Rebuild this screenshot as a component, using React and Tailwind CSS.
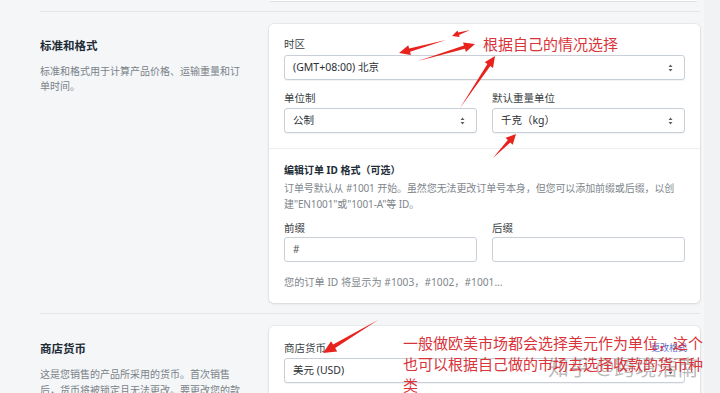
const font = { fontFamily: '"Noto Sans", "Noto Sans CJK SC", sans-serif' };

function Chevron() {
  return (
    <svg width="7" height="10" viewBox="0 0 7 10" className="shrink-0">
      <path d="M3.5 1.5 L5.5 4 L1.5 4 Z" fill="#5a6066" />
      <path d="M3.5 8.5 L5.5 6 L1.5 6 Z" fill="#5a6066" />
    </svg>
  );
}

function Select({ value, className = "" }) {
  return (
    <div className={`h-[25px] flex items-center justify-between pl-[8px] pr-[10px] bg-white border border-[#c9cfd6] rounded-[3px] shadow-[0_1px_0_rgba(22,29,37,0.05)] text-[10.5px] text-[#2b3036] ${className}`}>
      <span>{value}</span>
      <Chevron />
    </div>
  );
}

function Input({ value, className = "" }) {
  return (
    <div className={`h-[25px] flex items-center pl-[8px] bg-white border border-[#c9cfd6] rounded-[3px] text-[10px] text-[#555] ${className}`}>
      {value}
    </div>
  );
}

function Label({ children, className = "" }) {
  return <div className={`text-[10.5px] leading-[14px] text-[#3a3f44] ${className}`}>{children}</div>;
}

// tapered arrow polygon, tail -> head
function arrowPoints(x1, y1, x2, y2, w = 3.5, head = 11, hw = 5) {
  const dx = x2 - x1, dy = y2 - y1;
  const len = Math.hypot(dx, dy);
  const ux = dx / len, uy = dy / len;
  const nx = -uy, ny = ux;
  const bx = x2 - ux * head, by = y2 - uy * head;
  const pts = [
    [x1, y1],
    [bx + nx * (w / 2), by + ny * (w / 2)],
    [bx + nx * hw, by + ny * hw],
    [x2, y2],
    [bx - nx * hw, by - ny * hw],
    [bx - nx * (w / 2), by - ny * (w / 2)],
  ];
  return pts.map((p) => p.map((v) => v.toFixed(1)).join(",")).join(" ");
}

const arrows = [
  [446, 40, 399, 53, 3.5, 11, 5],
  [470, 30, 452, 36, 2.5, 7, 3.5],
  [418, 61, 475, 44, 3.5, 11, 5],
  [460, 108, 495, 56, 3.5, 11, 5],
  [493, 158, 516, 134, 3.5, 10, 5],
  [378, 320, 323, 353, 4, 13, 6],
];

export default function App() {
  return (
    <div className="relative w-[720px] h-[393px] overflow-hidden bg-[#f4f6f8]" style={font}>
      <div className="flex">
        <div className="w-[704px]">
          {/* previous card edge */}
          <div className="ml-[270px] w-[427px] h-[2px] bg-white border-b border-[#dde1e5]" />
          <div className="ml-[40px] w-[660px] h-px bg-[#e3e6e9] mt-[9px]" />

          {/* 标准和格式 */}
          <div className="flex pt-[12px]">
            <div className="w-[269px] shrink-0 pl-[40px] pt-[14px]">
              <div className="text-[11.5px] leading-[16px] font-bold text-[#212b36]">标准和格式</div>
              <div className="mt-[10px] w-[202px] text-[10px] leading-[15px] text-[#7b8288]">
                标准和格式用于计算产品价格、运输重量和订单时间。
              </div>
            </div>
            <div className="w-[431px] shrink-0 bg-white rounded-[5px] shadow-[0_0_0_1px_rgba(63,63,68,0.05),0_1px_3px_rgba(63,63,68,0.12)]">
              <div className="px-[15px] pt-[13px] pb-[15px] border-b border-[#eceef0]">
                <Label>时区</Label>
                <Select value="(GMT+08:00) 北京" className="mt-[4px]" />
                <div className="flex gap-[15px] mt-[11px]">
                  <div className="flex-1">
                    <Label>单位制</Label>
                    <Select value="公制" className="mt-[3px]" />
                  </div>
                  <div className="flex-1">
                    <Label>默认重量单位</Label>
                    <Select value="千克（kg）" className="mt-[3px]" />
                  </div>
                </div>
              </div>
              <div className="px-[15px] pt-[14px] pb-[14px]">
                <div className="text-[10px] leading-[14px] font-bold text-[#212b36]">编辑订单 ID 格式（可选）</div>
                <div className="mt-[3px] text-[10px] tracking-[-0.1px] leading-[16px] text-[#80868c]">
                  订单号默认从 #1001 开始。虽然您无法更改订单号本身，但您可以添加前缀或后缀，以创建"EN1001"或"1001-A"等 ID。
                </div>
                <div className="flex gap-[15px] mt-[9px]">
                  <div className="flex-1">
                    <Label>前缀</Label>
                    <Input value="#" className="mt-[2px]" />
                  </div>
                  <div className="flex-1">
                    <Label>后缀</Label>
                    <Input value="" className="mt-[2px]" />
                  </div>
                </div>
                <div className="mt-[13px] text-[10.2px] leading-[14px] text-[#80868c]">
                  您的订单 ID 将显示为 #1003，#1002，#1001...
                </div>
              </div>
            </div>
          </div>

          <div className="ml-[40px] w-[660px] h-px bg-[#e3e6e9] mt-[10px]" />

          {/* 商店货币 */}
          <div className="flex pt-[12px]">
            <div className="w-[269px] shrink-0 pl-[40px] pt-[15px]">
              <div className="text-[11.5px] leading-[16px] font-bold text-[#212b36]">商店货币</div>
              <div className="mt-[9px] w-[202px] text-[10px] leading-[16px] text-[#7b8288]">
                这是您销售的产品所采用的货币。首次销售后，货币将被锁定且无法更改。要更改您的款
              </div>
            </div>
            <div className="w-[431px] shrink-0 h-[80px] bg-white rounded-[5px] shadow-[0_0_0_1px_rgba(63,63,68,0.05),0_1px_3px_rgba(63,63,68,0.12)] pl-[15px] pr-[13px] pt-[15px]">
              <div className="flex justify-between items-center">
                <Label>商店货币</Label>
                <span className="text-[9px] leading-[14px] text-[#5c6ac4]">更改格式</span>
              </div>
              <Select value="美元 (USD)" className="mt-[3px] mr-[2px]" />
            </div>
          </div>
        </div>
        <div className="w-[16px] h-[393px] bg-[#f1f2f3]" />
      </div>

      {/* annotations */}
      <svg className="absolute inset-0 pointer-events-none" width="720" height="393">
        {arrows.map((a, i) => (
          <polygon key={i} points={arrowPoints(...a)} fill="#e8231d" />
        ))}
      </svg>
      <div className="absolute left-[483px] top-[34px] text-[15px] leading-[20px] text-[#d8343a]">
        根据自己的情况选择
      </div>
      <div className="absolute left-[548px] top-[354px] text-[21px] leading-[26px] text-[rgba(130,130,130,0.55)]">
        知乎 @跨境浩南
      </div>
      <div className="absolute left-[403px] top-[333px] w-[301px] text-[15px] leading-[21px] text-[#d8343a]">
        一般做欧美市场都会选择美元作为单位，这个也可以根据自己做的市场去选择收款的货币种类
      </div>
    </div>
  );
}
